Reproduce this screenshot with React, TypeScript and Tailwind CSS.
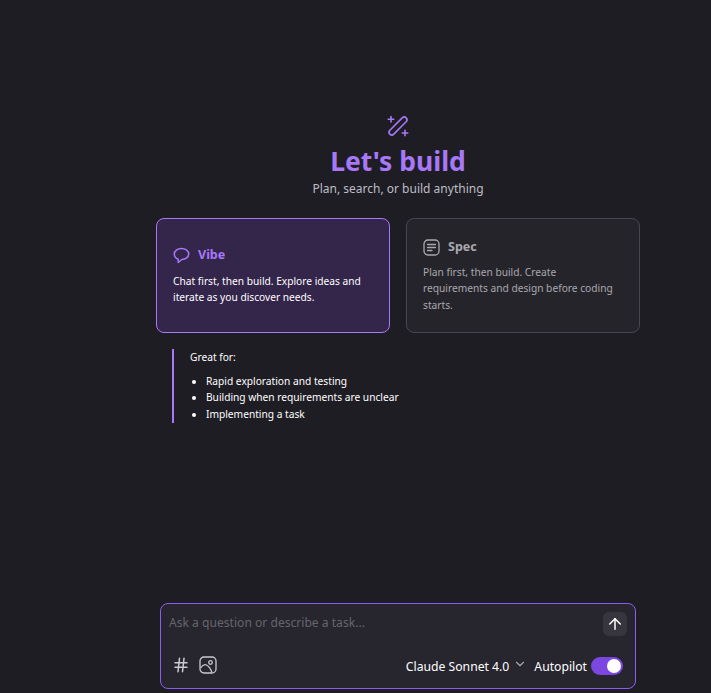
import React from 'react';
import { ArrowUp, ChevronDown, Hash } from 'lucide-react';

const font = 'font-["Noto_Sans","Open_Sans",sans-serif]';

const WandIcon = () => (
    <svg width="24" height="24" viewBox="0 0 24 24" fill="none" stroke="#a778f8" strokeWidth="1.6" strokeLinecap="round" strokeLinejoin="round">
        <rect x="0.5" y="9.250" width="23" height="5.500" rx="2.750" transform="rotate(-45 12 12)" />
        <path d="M5 2.500v5.500M2.250 5.250h5.500" />
        <path d="M19 16.250v5.500M16.250 19h5.500" />
    </svg>
);

const ChatIcon = () => (
    <svg width="17" height="17" viewBox="0 0 17 17" fill="none" stroke="#a778f8" strokeWidth="1.500" strokeLinejoin="round">
        <path d="M8.500 1.500c4.100 0 7.200 2.400 7.200 5.500 0 3.200-3.100 5.500-6.900 5.500L5.200 15.500v-3.300C2.800 11.300 1.300 9.300 1.300 7c0-3.100 3.100-5.500 7.200-5.500Z" />
    </svg>
);

const SpecIcon = () => (
    <svg width="17" height="17" viewBox="0 0 17 17" fill="none" stroke="#a9a9ad" strokeWidth="1.3" strokeLinecap="round">
        <rect x="1" y="1" width="15" height="15" rx="4" />
        <path d="M4.500 5.500h8M4.500 8.500h8M4.500 11.500h4.500" />
    </svg>
);

const ImageIcon = () => (
    <svg width="18" height="18" viewBox="0 0 18 18" fill="none" stroke="#c9c9d2" strokeWidth="1.3" strokeLinejoin="round">
        <rect x="1" y="1" width="16" height="16" rx="4" />
        <circle cx="11.500" cy="6.500" r="1.800" />
        <path d="M1.500 12c2-3 4-4 6-3 2 1 4 3.500 5.500 7.500" />
    </svg>
);

const App = () => {
    return (
        <div className={`flex h-screen flex-col items-center overflow-hidden bg-[#1f1d24] pl-[85px] ${font} text-white`}>
            <div className="flex flex-col items-center pt-[114px]">
                <WandIcon />
                <h1 className="mt-[5px] text-[26.500px] leading-[36px] font-bold text-[#a778f8]">Let's build</h1>
                <p className="pt-px text-[12px] leading-[18px] text-[#bdbdc4]">Plan, search, or build anything</p>
            </div>

            <div className="mt-[20px] w-[484px]">
                <div className="grid grid-cols-2 gap-4">
                    <div className="flex h-[115px] flex-col justify-center rounded-lg border border-[#a778f8] bg-[#34254b] px-4">
                        <div className="flex items-center gap-2">
                            <ChatIcon />
                            <span className="text-[12.500px] font-bold text-[#a778f8]">Vibe</span>
                        </div>
                        <p className="mt-[8px] text-[10.200px] leading-[16px] text-white">
                            Chat first, then build. Explore ideas and iterate as you discover needs.
                        </p>
                    </div>
                    <div className="flex h-[115px] flex-col justify-center rounded-lg border border-[#48464e] bg-[#26242b] px-4">
                        <div className="flex items-center gap-2">
                            <SpecIcon />
                            <span className="text-[12.500px] font-bold text-[#a9a9ad]">Spec</span>
                        </div>
                        <p className="mt-[7px] text-[10.200px] leading-[16.500px] text-[#a9a9ad]">
                            Plan first, then build. Create requirements and design before coding starts.
                        </p>
                    </div>
                </div>

                <div className="mt-4 ml-4 w-[260px] border-l-2 border-[#a778f8] pl-4 text-[10.200px] leading-[16.500px] text-white">
                    <p>Great for:</p>
                    <ul className="mt-[7px] list-disc pb-px pl-4">
                        <li>Rapid exploration and testing</li>
                        <li>Building when requirements are unclear</li>
                        <li>Implementing a task</li>
                    </ul>
                </div>
            </div>

            <div className="mt-auto mb-1 flex h-[86px] w-[476px] flex-col justify-between rounded-lg border border-[#8b5cf6] bg-[#27252e] px-2 pt-2 pb-[12px]">
                <div className="flex items-start justify-between">
                    <span className="text-[12.100px] leading-[21px] text-[#66656c]">Ask a question or describe a task...</span>
                    <button className="flex h-6 w-6 items-center justify-center rounded-md bg-[#37353d]">
                        <ArrowUp size={18} className="text-white" />
                    </button>
                </div>
                <div className="flex items-center justify-between">
                    <div className="mb-[2px] flex items-center gap-[9px] pl-[3px]">
                        <Hash size={18} className="text-[#c9c9d2]" />
                        <ImageIcon />
                    </div>
                    <div className="flex items-center text-[12.200px] text-white">
                        <span className="pt-[2px]">Claude Sonnet 4.0</span>
                        <ChevronDown size={14} className="mb-[3px] ml-1 text-[#a9a9ad]" />
                        <span className="ml-[7px] pt-[2px]">Autopilot</span>
                        <span className="mr-1 ml-1 flex h-[18px] w-[32px] items-center justify-end rounded-full bg-[#7c46e0] pr-[2px]">
                            <span className="h-[14px] w-[14px] rounded-full bg-white" />
                        </span>
                    </div>
                </div>
            </div>
        </div>
    );
};

export default App;
